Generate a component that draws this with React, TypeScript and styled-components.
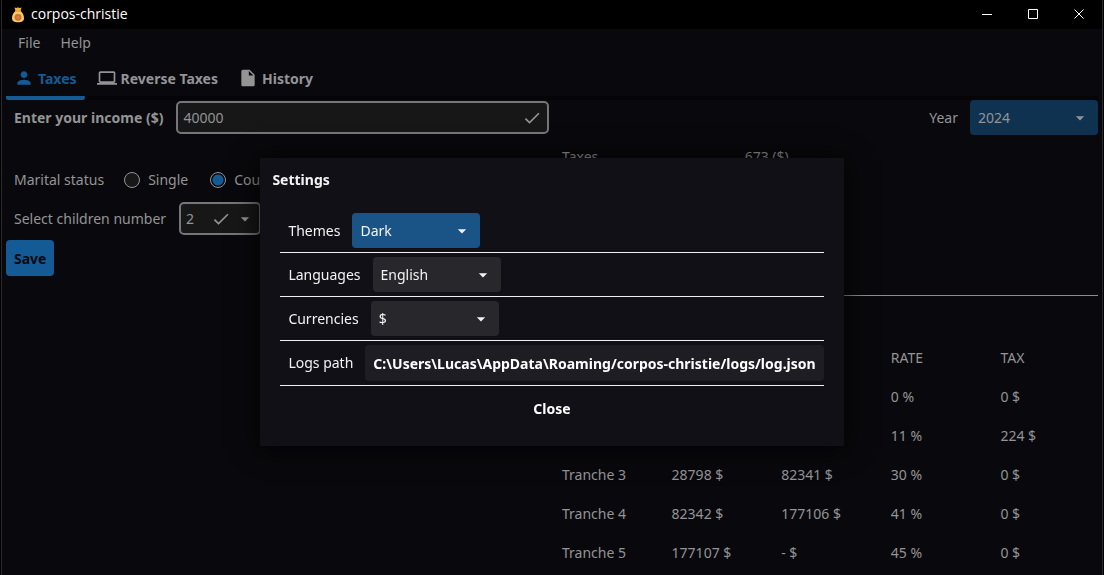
import React from "react";
import styled, { createGlobalStyle, css } from "styled-components";
import {
  MdArrowDropDown,
  MdCheck,
  MdInsertDriveFile,
  MdLaptop,
  MdPerson,
} from "react-icons/md";

const color = {
  page: "#09090d",
  track: "#050507",
  text: "#949495",
  line: "#8e8e8e",
  primary: "#145b96",
  field: "#171718",
  fieldBorder: "#767677",
  dialog: "#111016",
  dialogText: "#f3f3f3",
};

const GlobalStyle = createGlobalStyle`
  *, *::before, *::after { box-sizing: border-box; }
  body {
    margin: 0;
    background: #000;
    color: ${color.text};
    font: 14px/20px "Noto Sans", sans-serif;
  }
  button, input, select { font: inherit; color: inherit; margin: 0; }
  button { border: 0; padding: 0; background: none; cursor: pointer; }
`;

const Frame = styled.div`
  min-height: 100vh;
  margin: 0 1px;
  border: solid #2a2a2b;
  border-width: 0 1px;
  background: ${color.page};
`;

const TitleBar = styled.header`
  display: flex;
  align-items: center;
  height: 29px;
  padding-left: 8px;
  gap: 5px;
  background: #000;
  color: #fff;
`;

const AppName = styled.h1`
  flex: 1;
  margin: 0;
  font: 14px/20px "Open Sans", sans-serif;
  padding-bottom: 2px;
`;

const WindowControls = styled.div`
  display: flex;
`;

const WindowButton = styled.button`
  display: grid;
  place-items: center;
  width: 46px;
  height: 28px;
  padding-bottom: 2px;
`;

const MenuBar = styled.nav`
  display: flex;
  height: 28px;
  align-items: center;
  padding: 0 6px;
`;

const MenuButton = styled.button`
  padding: 0 10px;
`;

const TabBar = styled.div`
  display: flex;
  gap: 4px;
  margin: 3px 4px 0;
  border-bottom: 4px solid ${color.track};
`;

const Tab = styled.button<{ $active?: boolean }>`
  display: flex;
  align-items: center;
  gap: 4px;
  height: 40px;
  margin-bottom: -4px;
  padding: 0 8px;
  border-bottom: 4px solid transparent;
  border-radius: 2px;
  font-weight: 700;
  line-height: 22px;
  span { padding-top: 2px; }
  ${(p) =>
    p.$active &&
    css`
      color: ${color.primary};
      background: linear-gradient(${color.primary}, ${color.primary}) bottom / 100% 4px no-repeat border-box;
    `}
`;

const Main = styled.main`
  display: grid;
  grid-template-columns: 1fr 1fr;
  gap: 4px;
  padding: 0 4px 4px;
`;

const Form = styled.form`
  display: flex;
  flex-direction: column;
  gap: 4px;
`;

const Row = styled.div<{ $end?: boolean }>`
  display: flex;
  align-items: center;
  gap: 4px;
  min-height: 35px;
  justify-content: ${(p) => (p.$end ? "flex-end" : "flex-start")};
`;

const Spacer = styled.div`
  height: 19px;
`;

const Label = styled.label<{ $bold?: boolean }>`
  padding: 0 8px;
  font-weight: ${(p) => (p.$bold ? 700 : 400)};
`;

const Caption = styled.span`
  padding: 0 8px;
`;

const Control = styled.div<{ $grow?: boolean }>`
  display: grid;
  align-items: center;
  ${(p) => p.$grow && "flex: 1;"}
  & > * { grid-area: 1 / 1; }
`;

const Icons = styled.span<{ $inset: number }>`
  display: flex;
  gap: 4px;
  justify-self: end;
  margin-right: ${(p) => p.$inset}px;
  pointer-events: none;
`;

const fieldStyle = css`
  height: 33px;
  margin: 1px;
  padding: 0 5px;
  border: 2px solid ${color.fieldBorder};
  border-radius: 5px;
  background: ${color.field};
  outline: 0;
`;

const TextField = styled.input`
  && { ${fieldStyle} }
  min-width: 0;
`;

const NumberSelect = styled.select`
  && { ${fieldStyle} }
  appearance: none;
  width: 82px;
`;

const Select = styled.select<{ $fill: string }>`
  appearance: none;
  width: 128px;
  height: 35px;
  padding: 0 8px;
  border: 0;
  border-radius: 4px;
  background: ${(p) => p.$fill};
  outline: 0;
`;

const RadioGroup = styled.div`
  display: flex;
`;

const RadioLabel = styled.label`
  display: flex;
  align-items: center;
  gap: 8px;
  padding: 0 14px 0 8px;
`;

const Radio = styled.input`
  appearance: none;
  width: 16px;
  height: 16px;
  border: 1px solid ${color.text};
  border-radius: 50%;
  background: ${color.field};
  &:checked {
    background: radial-gradient(circle, ${color.primary} 5px, ${color.page} 6px);
  }
`;

const SaveButton = styled.button`
  align-self: flex-start;
  height: 36px;
  padding: 2px 8px 0;
  border-radius: 4px;
  background: ${color.primary};
  color: #08090c;
  font-weight: 700;
`;

const Results = styled.section`
  display: flex;
  flex-direction: column;
  gap: 4px;
`;

const Summary = styled.dl`
  display: grid;
  grid-template: repeat(4, 35px) / repeat(3, 1fr);
  gap: 4px;
  align-items: center;
  margin: 0;
  dt, dd { margin: 0; padding: 0 8px; }
`;

const Rule = styled.hr<{ $tone?: string }>`
  width: 100%;
  height: 1px;
  margin: 0;
  border: 0;
  background: ${(p) => p.$tone || color.line};
`;

const Brackets = styled.table`
  display: block;
  margin-top: 40px;
  thead, tbody { display: grid; gap: 4px; }
  tbody { margin-top: 4px; }
  tr {
    display: grid;
    grid-template-columns: repeat(5, 1fr);
    gap: 4px;
    align-items: center;
    height: 35px;
  }
  th, td {
    padding: 0 8px;
    text-align: left;
    font-weight: 400;
    white-space: nowrap;
  }
`;

const Overlay = styled.div`
  position: fixed;
  inset: 29px 0 0;
  display: grid;
  place-items: center;
`;

const Dialog = styled.section`
  padding: 12px 20px 20px;
  background: ${color.dialog};
  color: ${color.dialogText};
  box-shadow: 0 2px 24px 2px rgba(0, 0, 0, 0.8);
`;

const DialogTitle = styled.h2`
  margin: 0 -8px 23px;
  font-size: 14px;
  line-height: 20px;
`;

const Settings = styled.div`
  display: flex;
  flex-direction: column;
  gap: 4px;
`;

const PathButton = styled.button`
  height: 36px;
  padding: 2px 8px 0;
  border-radius: 4px;
  background: #1e1d23;
  color: #fff;
  font-weight: 700;
`;

const CloseButton = styled.button`
  align-self: center;
  height: 36px;
  padding: 2px 8px 0;
  color: #fff;
  font-weight: 700;
`;

function MoneyBag() {
  return (
    <svg width="16" height="18" viewBox="0 0 16 18" aria-hidden="true">
      <path d="M4.500 1.500 6.500 2 8 1.200 9.500 2 11.500 1.500 10.500 5H5.500Z" fill="#f2b23c" />
      <path d="M5.800 4.500h4.400C13 7 14 9.500 14 12c0 3-2 4.200-6 4.200S2 15 2 12C2 9.500 3 7 5.800 4.500Z" fill="#fbc860" />
      <path d="M5.500 5h5" stroke="#d98a2b" />
      <circle cx="8" cy="11.300" r="3.400" fill="#c86f35" />
      <circle cx="8" cy="11.300" r="1.800" fill="#d98048" />
    </svg>
  );
}

const windowGlyphs = [
  { name: "Minimize", path: "M0 5.500H10" },
  { name: "Maximize", path: "M.5.5H9.500V9.500H.5Z" },
  { name: "Close", path: "M.5.5 9.500 9.500M9.500.5.5 9.500" },
];

const tabs = [
  { name: "Taxes", Icon: MdPerson },
  { name: "Reverse Taxes", Icon: MdLaptop },
  { name: "History", Icon: MdInsertDriveFile },
];

const headings = ["", "", "", "RATE", "TAX"];

const brackets = [
  ["", "", "", "0 %", "0 $"],
  ["", "", "", "11 %", "224 $"],
  ["Tranche 3", "28798 $", "82341 $", "30 %", "0 $"],
  ["Tranche 4", "82342 $", "177106 $", "41 %", "0 $"],
  ["Tranche 5", "177107 $", "- $", "45 %", "0 $"],
];

const settings = [
  { id: "themes", label: "Themes", value: "Dark", fill: "#1a5386" },
  { id: "languages", label: "Languages", value: "English", fill: "#28272c" },
  { id: "currencies", label: "Currencies", value: "$", fill: "#28272c" },
];

function DropDown({ id, value, fill }: { id: string; value: string; fill: string }) {
  return (
    <Control>
      <Select id={id} $fill={fill}>
        <option>{value}</option>
      </Select>
      <Icons $inset={8}>
        <MdArrowDropDown size={20} />
      </Icons>
    </Control>
  );
}

export default function App() {
  return (
    <>
      <GlobalStyle />
      <Frame>
        <TitleBar>
          <MoneyBag />
          <AppName>corpos-christie</AppName>
          <WindowControls>
            {windowGlyphs.map((g) => (
              <WindowButton key={g.name} aria-label={g.name}>
                <svg width="10" height="10" viewBox="0 0 10 10" fill="none" stroke="#fff">
                  <path d={g.path} />
                </svg>
              </WindowButton>
            ))}
          </WindowControls>
        </TitleBar>
        <MenuBar>
          <MenuButton>File</MenuButton>
          <MenuButton>Help</MenuButton>
        </MenuBar>
        <TabBar role="tablist">
          {tabs.map(({ name, Icon }, i) => (
            <Tab key={name} role="tab" aria-selected={i === 0} $active={i === 0}>
              <Icon size={20} />
              <span>{name}</span>
            </Tab>
          ))}
        </TabBar>
        <Main>
          <Form onSubmit={(e) => e.preventDefault()}>
            <Row>
              <Label $bold htmlFor="income">Enter your income ($)</Label>
              <Control $grow>
                <TextField id="income" defaultValue="40000" />
                <Icons $inset={8}>
                  <MdCheck size={20} />
                </Icons>
              </Control>
            </Row>
            <Spacer />
            <Row role="radiogroup" aria-label="Marital status">
              <Caption>Marital status</Caption>
              <RadioGroup>
                <RadioLabel>
                  <Radio type="radio" name="status" />
                  Single
                </RadioLabel>
                <RadioLabel>
                  <Radio type="radio" name="status" defaultChecked />
                  Couple
                </RadioLabel>
              </RadioGroup>
            </Row>
            <Row>
              <Label htmlFor="children">Select children number</Label>
              <Control>
                <NumberSelect id="children">
                  <option>2</option>
                </NumberSelect>
                <Icons $inset={7}>
                  <MdCheck size={20} />
                  <MdArrowDropDown size={20} />
                </Icons>
              </Control>
            </Row>
            <SaveButton type="submit">Save</SaveButton>
          </Form>
          <Results>
            <Row $end>
              <Label htmlFor="year">Year</Label>
              <DropDown id="year" value="2024" fill="#0f3250" />
            </Row>
            <Summary>
              <dt>Taxes</dt>
              <dd>673 ($)</dd>
            </Summary>
            <Rule />
            <Brackets>
              <thead>
                <tr>
                  {headings.map((heading, i) => (
                    <th key={i} scope="col">{heading}</th>
                  ))}
                </tr>
              </thead>
              <tbody>
                {brackets.map((cells, row) => (
                  <tr key={row}>
                    {cells.map((cell, i) => (
                      <td key={i}>{cell}</td>
                    ))}
                  </tr>
                ))}
              </tbody>
            </Brackets>
          </Results>
        </Main>
      </Frame>
      <Overlay>
        <Dialog role="dialog" aria-labelledby="settings-title">
          <DialogTitle id="settings-title">Settings</DialogTitle>
          <Settings>
            {settings.map((s) => (
              <React.Fragment key={s.id}>
                <Row>
                  <Label htmlFor={s.id}>{s.label}</Label>
                  <DropDown id={s.id} value={s.value} fill={s.fill} />
                </Row>
                <Rule $tone="#f0f0f0" />
              </React.Fragment>
            ))}
            <Row>
              <Caption>Logs path</Caption>
              <PathButton>C:\Users\Lucas\AppData\Roaming/corpos-christie/logs/log.json</PathButton>
            </Row>
            <Rule $tone="#f0f0f0" />
            <CloseButton>Close</CloseButton>
          </Settings>
        </Dialog>
      </Overlay>
    </>
  );
}
